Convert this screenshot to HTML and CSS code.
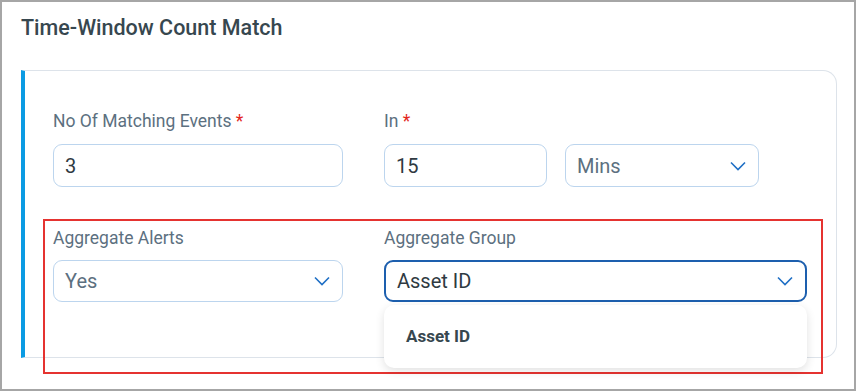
FILE: index.html
```html
<!DOCTYPE html>
<html lang="en">
<head>
  <meta charset="UTF-8" />
  <title>Time-Window Count Match</title>
  <link rel="stylesheet" href="styles.css">
</head>
<body>
  <div class="frame">
    <h2 class="section-title">Time-Window Count Match</h2>
    <div class="card">
      <div class="row row-top">
        <div class="field">
          <label>No Of Matching Events <span class="req">*</span></label>
          <div class="input">3</div>
        </div>
        <div class="field">
          <label>In <span class="req">*</span></label>
          <div class="pair">
            <div class="input input-in">15</div>
            <div class="select select-unit">
              <span class="placeholder">Mins</span>
              <svg class="chevron" viewBox="0 0 16 10" width="16" height="10"><path d="M1 1.5 L8 8.5 L15 1.5" fill="none" stroke="#1f6fc5" stroke-width="1.6"/></svg>
            </div>
          </div>
        </div>
      </div>
      <div class="highlight">
        <div class="row">
          <div class="field">
            <label>Aggregate Alerts</label>
            <div class="select">
              <span class="placeholder">Yes</span>
              <svg class="chevron" viewBox="0 0 16 10" width="16" height="10"><path d="M1 1.5 L8 8.5 L15 1.5" fill="none" stroke="#1f6fc5" stroke-width="1.6"/></svg>
            </div>
          </div>
          <div class="field field-group">
            <label>Aggregate Group</label>
            <div class="select select-open">
              <span class="value">Asset ID</span>
              <svg class="chevron" viewBox="0 0 16 10" width="16" height="10"><path d="M1 1.5 L8 8.5 L15 1.5" fill="none" stroke="#1f6fc5" stroke-width="1.6"/></svg>
            </div>
            <ul class="menu">
              <li>Asset ID</li>
            </ul>
          </div>
        </div>
      </div>
    </div>
  </div>
</body>
</html>
```

FILE: styles.css
```css
* {
  box-sizing: border-box;
}
body {
  margin: 0;
  font-family: Roboto, 'Liberation Sans', sans-serif;
  background: #fff;
}
.frame {
  width: 856px;
  height: 391px;
  border: 2px solid #a6a6a6;
  padding: 13px 19px 0 19px;
  overflow: hidden;
}
.section-title {
  margin: 0;
  font-size: 21.5px;
  font-weight: 500;
  color: #37474f;
  line-height: 26px;
}
.card {
  margin-top: 29px;
  width: 816px;
  height: 288px;
  border: 1px solid #dde3ea;
  border-left: 4px solid #0b9be3;
  border-radius: 0 14px 14px 0;
  padding: 40px 0 0 28px;
}
.row {
  display: grid;
  grid-template-columns: 290px 423px;
  column-gap: 41px;
}
label {
  display: block;
  font-size: 17.5px;
  color: #5c7080;
  line-height: 20px;
  margin-bottom: 13px;
}
.req {
  color: #e3261c;
}
.input, .select {
  height: 43px;
  border: 1px solid #bcd5ee;
  border-radius: 9px;
  padding: 0 11px;
  font-size: 20px;
  color: #2f3a42;
  display: flex;
  align-items: center;
}
.pair {
  display: flex;
  gap: 18px;
}
.input-in {
  width: 163px;
}
.select {
  justify-content: space-between;
}
.select-unit {
  width: 194px;
}
.placeholder {
  color: #5c7080;
}
.chevron {
  margin-right: 1px;
}
.highlight {
  margin: 32px 0 0 -10px;
  width: 780px;
  height: 155px;
  border: 2px solid #e53330;
  padding: 7px 0 0 8px;
  position: relative;
}
.highlight label {
  margin-bottom: 12px;
}
.highlight .input, .highlight .select {
  height: 42px;
}
.field-group {
  position: relative;
}
.select-open {
  border: 2px solid #1d5fae;
  padding: 0 11px 0 11px;
}
.value {
  color: #2f3a42;
}
.menu {
  position: absolute;
  left: 0;
  right: 0;
  top: 77px;
  margin: 0;
  padding: 0;
  list-style: none;
  background: #fff;
  border-radius: 10px;
  box-shadow: 0 3px 10px rgba(0, 0, 0, 0.12);
  height: 63px;
}
.menu li {
  padding: 21px 22px;
  font-size: 17px;
  font-weight: 700;
  color: #37474f;
}
```
